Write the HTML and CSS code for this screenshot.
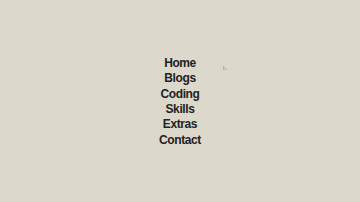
FILE: index.html
```html
<!DOCTYPE html>
<html lang="en">
<head>
    <meta charset="UTF-8">
    <meta name="viewport" content="width=device-width, initial-scale=1.0">
    <title>Menu</title>
    <link rel="stylesheet" href="styles.css">
</head>
<body>
    <nav class="menu">
        <a href="#">Home</a>
        <a href="#">Blogs</a>
        <a href="#">Coding</a>
        <a href="#">Skills</a>
        <a href="#">Extras</a>
        <a href="#">Contact</a>
    </nav>

    <!-- mouse pointer left in the capture -->
    <svg class="pointer" width="4" height="5" viewBox="0 0 4 5">
        <path d="M0.5 0.5 L0.5 4 L1.5 3 L3.5 3.5 Z" fill="#ecebe6" stroke="#9a978f" stroke-width="0.6"/>
    </svg>
</body>
</html>
```

FILE: styles.css
```css
:root {
    --bg: #dcd8cc;
    --text: #222222;
}

body {
    font-family: "Liberation Sans", Arial, sans-serif;
    background-color: var(--bg);
    display: flex;
    justify-content: center;
    align-items: center;
    height: 100vh;
    margin: 0;
}

.menu {
    display: flex;
    flex-direction: column;
    align-items: center;
    padding-top: 2px;
}

.menu a {
    color: var(--text);
    text-decoration: none;
    font-weight: 700;
    font-size: 12px;
    line-height: 15.4px;
    letter-spacing: -0.4px;
}

.pointer {
    position: absolute;
    left: 223px;
    top: 66px;
}
```
